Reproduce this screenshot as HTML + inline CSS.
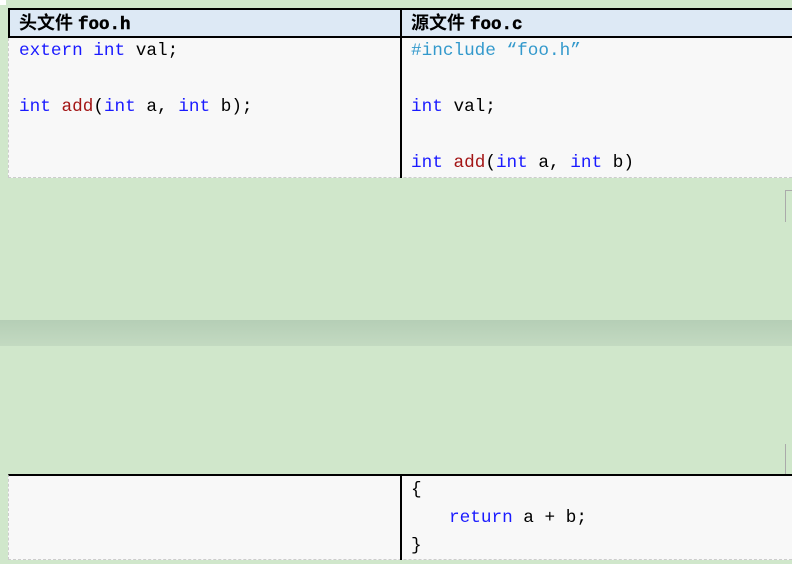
<!DOCTYPE html>
<html><head><meta charset="utf-8"><style>
*{margin:0;padding:0;box-sizing:border-box}
body{width:792px;height:564px;background:#d0e7cb;position:relative;overflow:hidden;font-family:"Liberation Mono",monospace}
.a{position:absolute}
.code{font-size:17.7px;line-height:28px;white-space:pre;color:#000}
.k{color:#1a1aff}.f{color:#a31515}.p{color:#3399cc}
.h{font-family:"Liberation Sans","Noto Sans CJK SC",sans-serif;font-weight:bold;font-size:18px;line-height:28px}
.h b{font-family:"Liberation Mono",monospace;font-size:17.5px;-webkit-text-stroke:0.5px #000}
</style></head><body>
<div class="a" style="left:0;top:0;width:6px;height:5px;background:#fff"></div>
<div class="a" style="left:8px;top:8px;width:784px;height:30px;background:#dde9f5;border-top:2px solid #000;border-bottom:2px solid #000;border-left:2px solid #000"></div>
<div class="a" style="left:8px;top:38px;width:784px;height:140px;background:#f8f8f8;border-left:1px dashed #ccc;border-bottom:1px dashed #ccc"></div>
<div class="a" style="left:400px;top:8px;width:2px;height:170px;background:#000"></div>
<div class="a h" style="left:19px;top:9px">头文件 <b>foo.h</b></div>
<div class="a h" style="left:411px;top:9px">源文件 <b>foo.c</b></div>
<div class="a code" style="left:19px;top:37px"><span class="k">extern int</span> val;

<span class="k">int</span> <span class="f">add</span>(<span class="k">int</span> a, <span class="k">int</span> b);</div>
<div class="a code" style="left:411px;top:37px"><span class="p">#include “foo.h”</span>

<span class="k">int</span> val;

<span class="k">int</span> <span class="f">add</span>(<span class="k">int</span> a, <span class="k">int</span> b)</div>
<div class="a" style="left:785px;top:190px;width:1px;height:32px;background:#aaa"></div>
<div class="a" style="left:785px;top:190px;width:7px;height:1px;background:#aaa"></div>
<div class="a" style="left:0;top:320px;width:792px;height:26px;background:linear-gradient(#b5ceb6,#c3dac1)"></div>
<div class="a" style="left:785px;top:444px;width:1px;height:30px;background:#aaa"></div>
<div class="a" style="left:8px;top:474px;width:784px;height:86px;background:#f8f8f8;border-top:2px solid #000;border-left:1px dashed #ccc;border-bottom:1px dashed #ccc"></div>
<div class="a" style="left:400px;top:474px;width:2px;height:86px;background:#000"></div>
<div class="a code" style="left:411px;top:476px">{
<span style="display:inline-block;width:38px"></span><span class="k">return</span> a + b;
}</div>
</body></html>
